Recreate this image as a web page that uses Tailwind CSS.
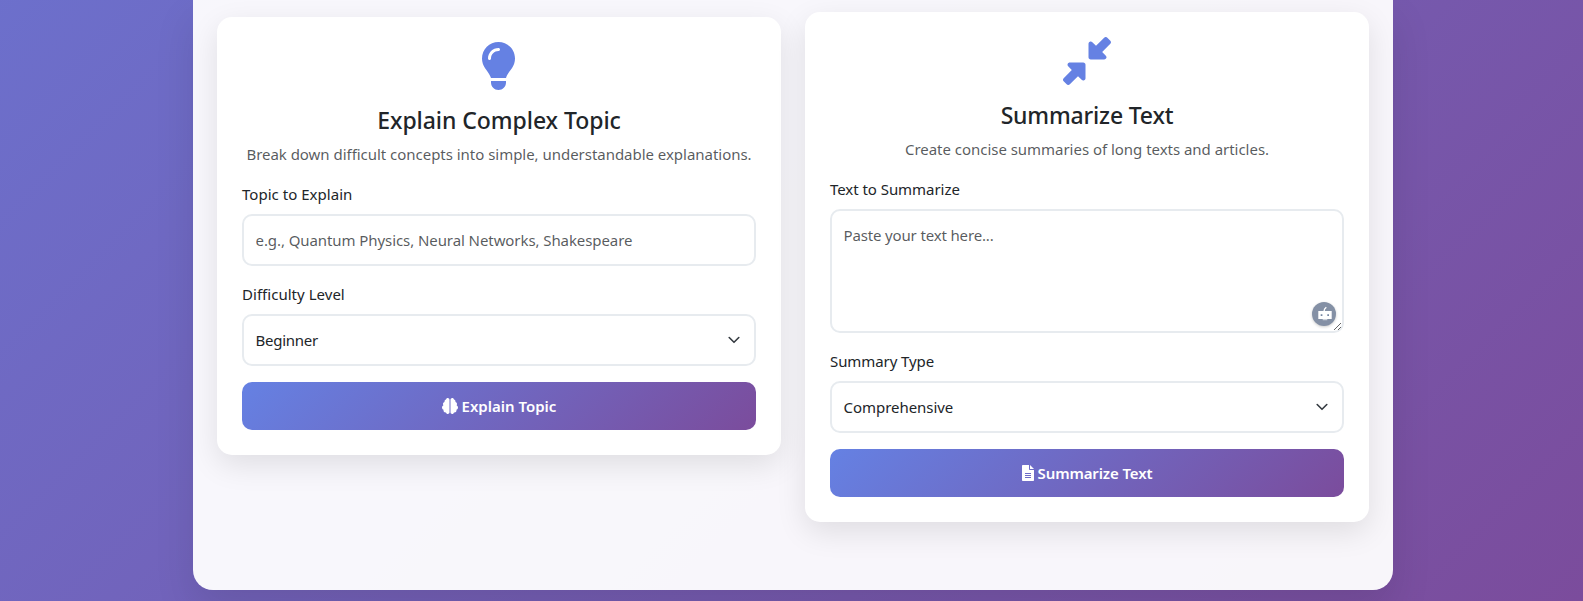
<!DOCTYPE html>
<html lang="en">
<head>
<meta charset="utf-8">
<title>Study Assistant</title>
<script src="https://cdn.jsdelivr.net/npm/@tailwindcss/browser@4"></script>
</head>
<body class="flex h-[601px] items-start justify-center overflow-hidden bg-[linear-gradient(135deg,#6581e3_0%,#7b4c9c_100%)] bg-[length:100%_1680px] bg-bottom bg-no-repeat pl-[3px] font-['Noto_Sans',sans-serif] text-[15px] leading-6 text-[#212529]">
  <main class="flex h-[590px] w-[1200px] items-start gap-6 rounded-b-[20px] bg-white/95 px-6 pt-3 shadow-[0_20px_40px_rgba(0,0,0,0.1)]">

    <section class="mt-[5px] flex-1 rounded-[15px] bg-white p-[25px] shadow-[0_10px_30px_rgba(0,0,0,0.1)]">
      <div class="text-center">
        <svg class="mx-auto mb-4 block h-12 w-9 -translate-x-[0.5px] fill-[#6581e3]" viewBox="0 0 384 512"><path d="M272 384c9.600-31.900 29.500-59.100 49.200-86.200l0 0c5.200-7.100 10.400-14.200 15.400-21.400c19.800-28.500 31.400-63 31.400-100.300C368 78.800 289.200 0 192 0S16 78.800 16 176c0 37.300 11.600 71.900 31.400 100.300c5 7.200 10.200 14.300 15.400 21.400l0 0c19.800 27.100 39.700 54.400 49.200 86.200H272zM192 512c44.200 0 80-35.800 80-80V416H112v16c0 44.200 35.800 80 80 80zM112 176c0 8.800-7.200 16-16 16s-16-7.200-16-16c0-61.900 50.100-112 112-112c8.800 0 16 7.200 16 16s-7.200 16-16 16c-44.200 0-80 35.800-80 80z"/></svg>
        <h4 class="mb-[7px] text-[23px] leading-[28.8px] font-medium tracking-[-0.06px]">Explain Complex Topic</h4>
        <p class="mb-4 tracking-[-0.03px] whitespace-nowrap text-[#212529]/75">Break down difficult concepts into simple, understandable explanations.</p>
      </div>
      <div class="mb-4">
        <label class="mb-2 block tracking-[0.03px]">Topic to Explain</label>
        <input class="block h-[52px] w-full rounded-[10px] border-2 border-[#e7ebef] bg-white px-[11.5px] tracking-[-0.08px] placeholder:text-[#212529]/75" placeholder="e.g., Quantum Physics, Neural Networks, Shakespeare">
      </div>
      <div class="mb-4">
        <label class="mb-2 block tracking-[0.03px]">Difficulty Level</label>
        <div class="flex h-[52px] items-center justify-between rounded-[10px] border-2 border-[#e7ebef] bg-white pr-3 pl-[11.5px] tracking-[-0.25px]">
          <span>Beginner</span>
          <svg class="h-3 w-4" viewBox="2 2 12 12" fill="none" stroke="#343a40" stroke-width="1.600" stroke-linecap="round" stroke-linejoin="round"><path d="m3.200 5.500 4.800 4.800 4.800-4.800"/></svg>
        </div>
      </div>
      <button class="flex h-12 w-full items-center justify-center gap-1 rounded-[10px] bg-[linear-gradient(135deg,#6581e3_0%,#7b4c9c_100%)] font-semibold text-white">
        <svg class="size-4 fill-white" viewBox="0 0 512 512"><path d="M184 0c30.900 0 56 25.100 56 56V456c0 30.900-25.100 56-56 56c-28.900 0-52.700-21.900-55.700-50.100c-5.200 1.400-10.700 2.100-16.300 2.100c-35.300 0-64-28.700-64-64c0-7.400 1.300-14.600 3.600-21.200C21.400 367.400 0 338.200 0 304c0-31.900 18.700-59.500 45.800-72.300C37.100 220.800 32 207 32 192c0-30.700 21.600-56.300 50.400-62.600C80.800 123.900 80 118 80 112c0-29.900 20.600-55.100 48.300-62.100C131.300 21.900 155.100 0 184 0zM328 0c28.900 0 52.600 21.900 55.700 49.900c27.800 7 48.300 32.100 48.300 62.100c0 6-.8 11.900-2.400 17.400c28.800 6.200 50.400 31.900 50.400 62.600c0 15-5.100 28.800-13.800 39.700C493.300 244.500 512 272.100 512 304c0 34.200-21.400 63.400-51.600 74.800c2.300 6.600 3.600 13.800 3.600 21.200c0 35.300-28.700 64-64 64c-5.600 0-11.100-.7-16.300-2.100c-3 28.200-26.800 50.100-55.700 50.100c-30.900 0-56-25.100-56-56V56c0-30.900 25.100-56 56-56z"/></svg>
        <span>Explain Topic</span>
      </button>
    </section>

    <section class="flex-1 rounded-[15px] bg-white p-[25px] shadow-[0_10px_30px_rgba(0,0,0,0.1)]">
      <div class="text-center">
        <svg class="mx-auto mb-4 block size-12 fill-[#6581e3]" viewBox="0 0 512 512"><path d="M439 7c9.400-9.400 24.600-9.400 33.900 0l32 32c9.400 9.400 9.400 24.600 0 33.900l-87 87 39 39c6.900 6.900 8.900 17.200 5.200 26.200s-12.500 14.800-22.200 14.800H296c-13.300 0-24-10.700-24-24V72c0-9.700 5.800-18.500 14.800-22.200s19.300-1.700 26.200 5.200l39 39L439 7zM72 272H216c13.300 0 24 10.700 24 24V440c0 9.700-5.800 18.500-14.800 22.200s-19.300 1.700-26.200-5.200l-39-39L73 505c-9.400 9.400-24.600 9.400-33.900 0L7 473c-9.400-9.400-9.400-24.600 0-33.900l87-87L55 313c-6.900-6.900-8.900-17.200-5.200-26.200s12.500-14.800 22.200-14.800z"/></svg>
        <h4 class="mb-[7px] text-[23px] leading-[28.8px] font-medium tracking-[-0.18px]">Summarize Text</h4>
        <p class="mb-4 tracking-[-0.03px] text-[#212529]/75">Create concise summaries of long texts and articles.</p>
      </div>
      <div class="relative mb-4">
        <label class="mb-2 block tracking-[-0.05px]">Text to Summarize</label>
        <textarea class="block h-[124px] w-full resize-y rounded-[10px] border-2 border-[#e7ebef] bg-white px-[11.5px] py-3 tracking-[-0.15px] placeholder:text-[#212529]/75" placeholder="Paste your text here..."></textarea>
        <svg class="absolute right-[8px] bottom-[7px] size-6 rounded-full bg-[#8490a5] shadow-[0_1px_3px_rgba(0,0,0,0.2)]" viewBox="0 0 24 24">
          <path d="M12 9.300 12.600 7 14.300 5.300" fill="none" stroke="#fff" stroke-width="1.300"/>
          <path d="M6.300 9h13.400v8H6.300z" fill="#fff"/>
          <path d="M8.700 12.200h1.700v1.800H8.700zM15.300 12.200h1.700v1.800h-1.700z" fill="#7485a0"/>
          <path d="M10.700 17h4.600v1.300h-4.600z" fill="#fff" opacity=".6"/>
        </svg>
      </div>
      <div class="mb-4">
        <label class="mb-2 block tracking-[-0.08px]">Summary Type</label>
        <div class="flex h-[52px] items-center justify-between rounded-[10px] border-2 border-[#e7ebef] bg-white pr-3 pl-[11.5px] tracking-[-0.04px]">
          <span>Comprehensive</span>
          <svg class="h-3 w-4" viewBox="2 2 12 12" fill="none" stroke="#343a40" stroke-width="1.600" stroke-linecap="round" stroke-linejoin="round"><path d="m3.200 5.500 4.800 4.800 4.800-4.800"/></svg>
        </div>
      </div>
      <button class="flex h-12 w-full items-center justify-center gap-1 rounded-[10px] bg-[linear-gradient(135deg,#6581e3_0%,#7b4c9c_100%)] font-semibold tracking-[-0.12px] text-white">
        <svg class="h-4 w-3 fill-white" viewBox="0 0 384 512"><path fill-rule="evenodd" d="M32 0C14 0 0 14 0 32V480c0 18 14 32 32 32H352c18 0 32-14 32-32V160H256c-17.700 0-32-14.300-32-32V0H32zM256 0V128H384L256 0zM96 256H288V288H96zM96 320H288V352H96zM96 384H288V416H96z"/></svg>
        <span>Summarize Text</span>
      </button>
    </section>

  </main>
</body>
</html>
